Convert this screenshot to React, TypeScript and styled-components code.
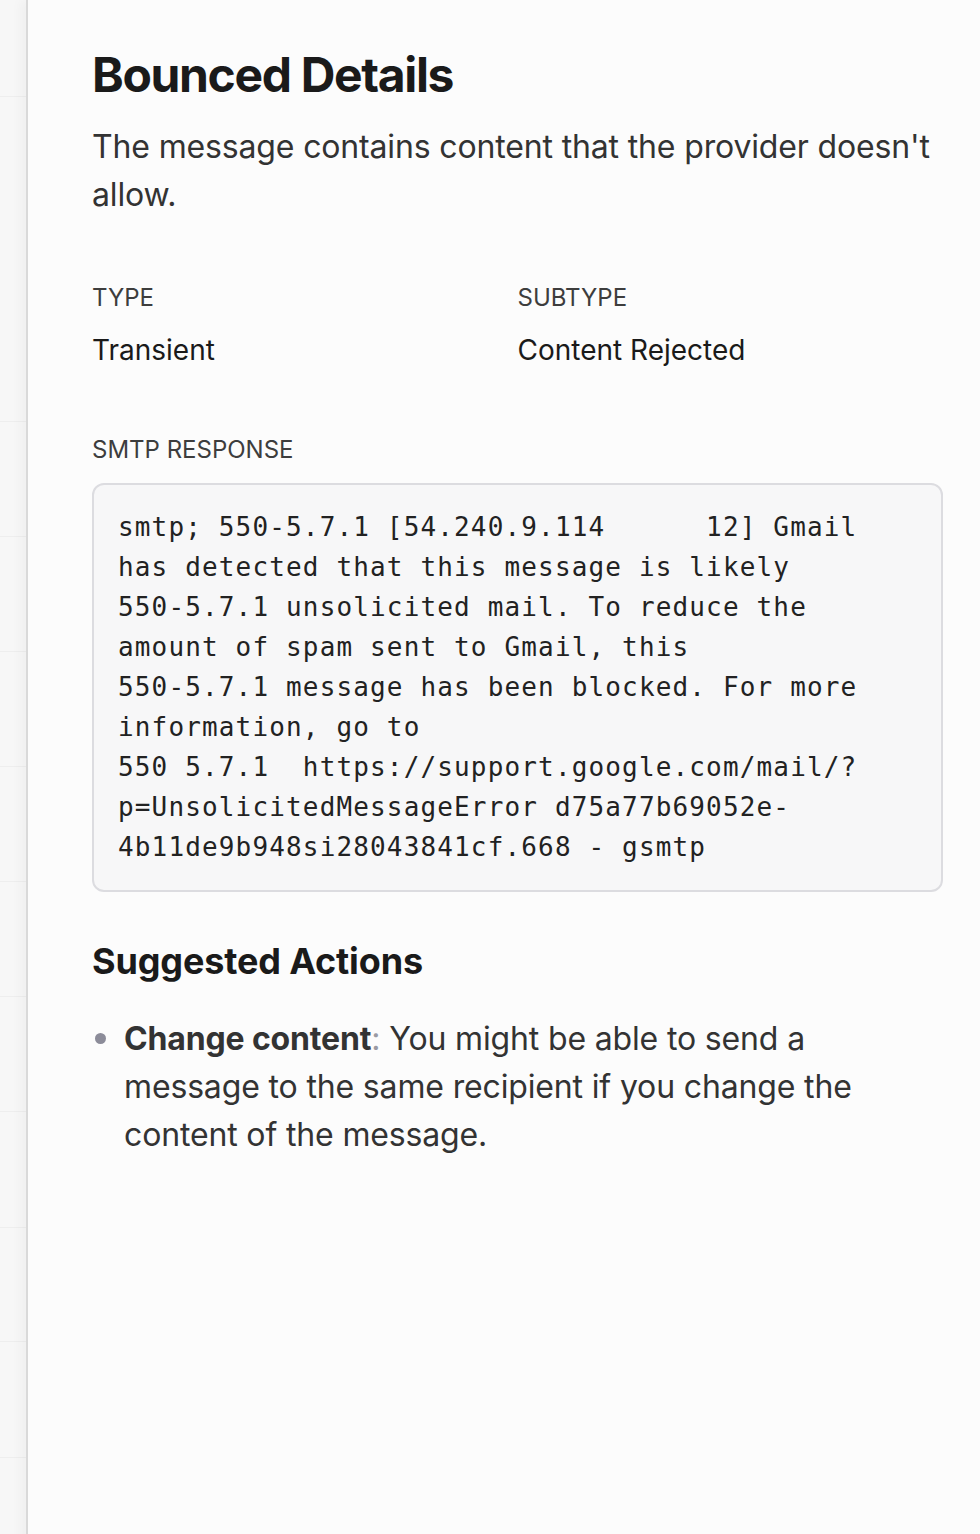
import React from 'react'
import styled, { createGlobalStyle } from 'styled-components'

const GlobalStyle = createGlobalStyle`
  html, body {
    margin: 0;
    padding: 0;
    background: #f6f6f6;
  }
  body {
    font-family: Inter, "Noto Sans", "Liberation Sans", sans-serif;
    -webkit-font-smoothing: antialiased;
  }
`

const SMTP_LINES = [
  'smtp; 550-5.7.1 [54.240.9.114      12] Gmail',
  'has detected that this message is likely',
  '550-5.7.1 unsolicited mail. To reduce the',
  'amount of spam sent to Gmail, this',
  '550-5.7.1 message has been blocked. For more',
  'information, go to',
  '550 5.7.1  https://support.google.com/mail/?',
  'p=UnsolicitedMessageError d75a77b69052e-',
  '4b11de9b948si28043841cf.668 - gsmtp',
]

const BACK_ROWS = [96, 324, 114, 114, 114, 114, 114, 114, 115, 113, 115, 120]

export default function App() {
  return (
    <>
      <GlobalStyle />
      <Screen>
        <Backdrop>
          {BACK_ROWS.map((h, i) => (
            <BackRow key={i} style={{ height: h }} />
          ))}
        </Backdrop>
        <Panel>
          <Title>Bounced Details</Title>
          <Lead>The message contains content that the provider doesn't allow.</Lead>

          <Facts>
            <Fact>
              <Label>Type</Label>
              <Value>Transient</Value>
            </Fact>
            <Fact>
              <Label>Subtype</Label>
              <Value>Content Rejected</Value>
            </Fact>
          </Facts>

          <Label>SMTP Response</Label>
          <CodeBox>{SMTP_LINES.join('\n')}</CodeBox>

          <SubTitle>Suggested Actions</SubTitle>
          <Actions>
            <Action>
              <strong>Change content</strong>
              <Colon>:</Colon> You might be able to send a message to the same recipient if you change the
              content of the message.
            </Action>
          </Actions>
        </Panel>
      </Screen>
    </>
  )
}

const Screen = styled.div`
  display: flex;
  min-height: 1534px;
  overflow: hidden;
`

const Backdrop = styled.div`
  width: 26px;
  flex-shrink: 0;
  display: flex;
  flex-direction: column;
  background: #f7f7f7;
`

const BackRow = styled.div`
  flex-shrink: 0;
  border-bottom: 1px solid #eeeeee;
`

const Panel = styled.section`
  flex: 1;
  min-width: 0;
  box-sizing: border-box;
  background: #fcfcfc;
  border-left: 2px solid #d9d9d9;
  box-shadow: -6px 0 10px rgba(0, 0, 0, 0.03);
  padding: 46px 37px 0 64px;
  color: #333333;
`

const Title = styled.h1`
  margin: 0;
  font-size: 48px;
  line-height: 1.2;
  font-weight: 700;
  letter-spacing: -0.028em;
  color: #1a1a1a;
`

const Lead = styled.p`
  margin: 19px 0 0;
  font-size: 32px;
  line-height: 48px;
  letter-spacing: -0.15px;
  color: #333333;
`

const Facts = styled.div`
  display: grid;
  grid-template-columns: 1fr 1fr;
  margin: 61px 0 61px;
`

const Fact = styled.div`
  display: flex;
  flex-direction: column;
  gap: 13px;
`

const Label = styled.div`
  font-size: 24px;
  line-height: 36px;
  text-transform: uppercase;
  color: #3d3d3d;
`

const Value = styled.div`
  font-size: 28px;
  line-height: 42px;
  color: #1a1a1a;
`

const CodeBox = styled.pre`
  margin: 15px 0 0;
  padding: 22px 24px 23px;
  background: #f7f7f8;
  border: 2px solid #dcdce0;
  border-radius: 12px;
  font-family: "DejaVu Sans Mono", "Liberation Mono", monospace;
  font-size: 26px;
  line-height: 40px;
  letter-spacing: 1.15px;
  color: #222222;
  white-space: pre;
`

const SubTitle = styled.h2`
  margin: 46px 0 0;
  font-size: 36px;
  line-height: 1.3;
  font-weight: 700;
  letter-spacing: -0.004em;
  color: #1a1a1a;
`

const Actions = styled.ul`
  margin: 30px 0 0;
  padding: 0 0 0 32px;
  font-size: 32px;
  line-height: 48px;
  letter-spacing: -0.15px;
  color: #333333;
  max-width: 760px;

  li::marker {
    color: #8c8c99;
    font-size: 34px;
  }
`

const Action = styled.li`
  strong {
    font-weight: 700;
    color: #333333;
  }
`

const Colon = styled.span`
  color: #9a9aa3;
`
